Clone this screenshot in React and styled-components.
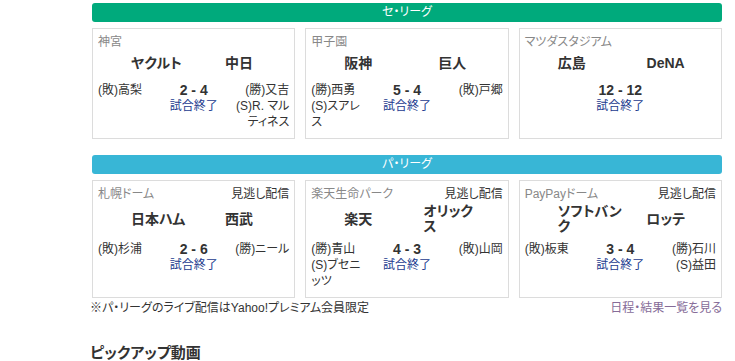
import styled, { createGlobalStyle } from "styled-components";

// 試合データ
const leagues = [
  {
    id: "central",
    name: "セ・リーグ",
    color: "#00aa7c",
    games: [
      {
        venue: "神宮",
        home: "ヤクルト",
        away: "中日",
        score: "2 - 4",
        left: ["(敗)高梨"],
        right: ["(勝)又吉", "(S)R. マルティネス"],
      },
      {
        venue: "甲子園",
        home: "阪神",
        away: "巨人",
        score: "5 - 4",
        left: ["(勝)西勇", "(S)スアレス"],
        right: ["(敗)戸郷"],
      },
      {
        venue: "マツダスタジアム",
        home: "広島",
        away: "DeNA",
        score: "12 - 12",
        left: [],
        right: [],
      },
    ],
  },
  {
    id: "pacific",
    name: "パ・リーグ",
    color: "#38b6d6",
    games: [
      {
        venue: "札幌ドーム",
        replay: true,
        home: "日本ハム",
        away: "西武",
        score: "2 - 6",
        left: ["(敗)杉浦"],
        right: ["(勝)ニール"],
      },
      {
        venue: "楽天生命パーク",
        replay: true,
        home: "楽天",
        away: "オリックス",
        score: "4 - 3",
        left: ["(勝)青山", "(S)ブセニッツ"],
        right: ["(敗)山岡"],
      },
      {
        venue: "PayPayドーム",
        replay: true,
        home: "ソフトバンク",
        away: "ロッテ",
        score: "3 - 4",
        left: ["(敗)板東"],
        right: ["(勝)石川", "(S)益田"],
      },
    ],
  },
];

const GlobalStyle = createGlobalStyle`
  body {
    margin: 0;
    background: #fff;
    color: #333;
    font-family: "Liberation Sans", "Noto Sans CJK JP", sans-serif;
    font-feature-settings: "palt";
  }
`;

const Page = styled.div`
  width: 630px;
  margin-left: 92px;
  padding-top: 3px;
`;

const Section = styled.section`
  margin-bottom: 16px;
`;

const LeagueBar = styled.div`
  height: 19px;
  line-height: 19px;
  border-radius: 3px;
  background: ${({ $color }) => $color};
  color: #fff;
  font-size: 12px;
  text-align: center;
`;

const CardRow = styled.div`
  display: grid;
  grid-template-columns: repeat(3, 1fr);
  grid-template-rows: auto auto auto;
  column-gap: 10px;
  margin-top: 6px;
`;

const Card = styled.div`
  grid-row: span 3;
  display: grid;
  grid-template-rows: subgrid;
  border: 1px solid #dcdcdc;
  padding: 0 5px 8px;
  font-size: 12px;
  line-height: 16px;
`;

const VenueRow = styled.div`
  display: flex;
  justify-content: space-between;
  margin-top: 5px;
`;

const Venue = styled.span`
  color: #888;
`;

const Replay = styled.span`
  color: #333;
`;

const TeamRow = styled.div`
  display: flex;
  align-items: center;
  gap: 11px;
  min-height: 24px;
  margin-top: 2px;
  padding-left: 33px;
`;

const TeamSlot = styled.div`
  width: ${({ $side }) => ($side === "away" ? "58px" : "68px")};
  text-align: ${({ $side }) => ($side === "away" ? "center" : "left")};
`;

const TeamName = styled.span`
  display: inline-block;
  text-align: left;
  font-size: 14px;
  font-weight: bold;
  line-height: 15px;
  color: #333;
`;

const ResultRow = styled.div`
  display: grid;
  grid-template-columns: 58px 1fr 58px;
  align-items: start;
  margin-top: 6px;
`;

const Pitchers = styled.div`
  text-align: ${({ $side }) => ($side === "right" ? "right" : "left")};
`;

const Score = styled.div`
  text-align: center;
`;

const ScoreText = styled.div`
  font-size: 14px;
  font-weight: bold;
`;

const Status = styled.a`
  display: block;
  color: #1c3b8f;
  text-decoration: none;
`;

const Footer = styled.div`
  display: flex;
  justify-content: space-between;
  margin: -14px 0 0 -2px;
  font-size: 12px;
  line-height: 16px;
`;

const ScheduleLink = styled.a`
  color: #866c98;
  text-decoration: none;
`;

const PickupTitle = styled.h2`
  margin: 27px 0 0 -2px;
  font-size: 15px;
  line-height: 20px;
  font-weight: bold;
  color: #333;
`;

function GameCard({ game }) {
  return (
    <Card>
      <VenueRow>
        <Venue>{game.venue}</Venue>
        {game.replay && <Replay>見逃し配信</Replay>}
      </VenueRow>
      <TeamRow>
        <TeamSlot $side="home">
          <TeamName>{game.home}</TeamName>
        </TeamSlot>
        <TeamSlot $side="away">
          <TeamName>{game.away}</TeamName>
        </TeamSlot>
      </TeamRow>
      <ResultRow>
        <Pitchers>
          {game.left.map((p) => (
            <div key={p}>{p}</div>
          ))}
        </Pitchers>
        <Score>
          <ScoreText>{game.score}</ScoreText>
          <Status href="#">試合終了</Status>
        </Score>
        <Pitchers $side="right">
          {game.right.map((p) => (
            <div key={p}>{p}</div>
          ))}
        </Pitchers>
      </ResultRow>
    </Card>
  );
}

export default function App() {
  return (
    <>
      <GlobalStyle />
      <Page>
        {leagues.map((league) => (
          <Section key={league.id}>
            <LeagueBar $color={league.color}>{league.name}</LeagueBar>
            <CardRow>
              {league.games.map((game) => (
                <GameCard key={game.venue} game={game} />
              ))}
            </CardRow>
          </Section>
        ))}
        <Footer>
          <span>※パ・リーグのライブ配信はYahoo!プレミアム会員限定</span>
          <ScheduleLink href="#">日程・結果一覧を見る</ScheduleLink>
        </Footer>
        <PickupTitle>ピックアップ動画</PickupTitle>
      </Page>
    </>
  );
}
